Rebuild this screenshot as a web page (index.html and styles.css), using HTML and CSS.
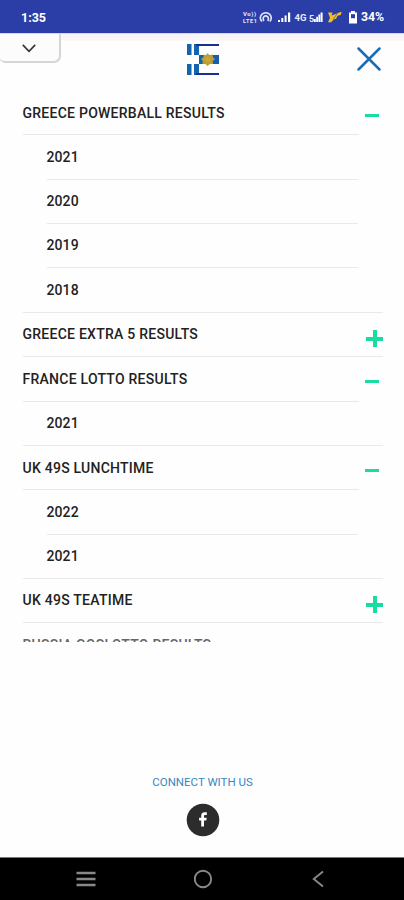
FILE: index.html
```html
<!DOCTYPE html>
<html lang="en">
<head>
  <meta charset="UTF-8">
  <meta name="viewport" content="width=device-width, initial-scale=1.0">
  <title>Lottery Results</title>
  <link rel="stylesheet" href="styles.css">
</head>
<body>
  <div class="status-bar">
    <span class="time">1:35</span>
    <div class="status-right">
      <svg class="status-icons" width="117" height="16" viewBox="0 0 117 16">
        <g class="status-text">
          <text x="1" y="7.2" font-size="6" textLength="13">Vo))</text>
          <text x="1" y="13.5" font-size="5.5" textLength="14">LTE1</text>
          <text x="52.5" y="12" font-size="9.5" textLength="12">4G</text>
          <text x="67" y="13" font-size="9">5</text>
        </g>
        <!-- hotspot -->
        <path d="M20 12.5 Q17.5 10 18.7 7 Q20.3 3.8 23.8 3.8 Q27.3 3.8 28.9 7 Q30 10 27.8 12.5 M21.8 12 Q20.4 9.5 22 7.6 Q23.8 6.2 25.6 7.6 Q27.2 9.5 25.8 12" fill="none" stroke="#dfe2fa" stroke-width="1.6"/>
        <!-- signal bars -->
        <path d="M36 11h2v2h-2z M39.3 9h2v4h-2z M42.6 6.5h2v6.5h-2z M46 3.5h2.2V13H46z" fill="#fff"/>
        <path d="M72 10h1.8v3H72z M74.2 7.8h1.8V13h-1.8z M76.4 5.5h1.8V13h-1.8z M78.6 3.5h2V13h-2z" fill="#fff"/>
        <!-- stripes -->
        <path d="M86 3.5h4.5l-.8 3L98.5 3h1.2l-1 3-3.2.8-1.4 3-2.6.6-2.2 2.8H86l2-4.5z" fill="#f2bd26"/>
        <path d="M91.5 10l4-6" stroke="#2b3ea8" stroke-width=".6"/>
        <!-- battery -->
        <path d="M109 2h4v1.4h2V14.6h-8V3.4h2z" fill="#fff"/>
        <path d="M109 5.2h4v4h-4z" fill="#2b3ea8"/>
      </svg>
      <span class="battery-level">34%</span>
    </div>
  </div>

  <div class="page">
    <header class="header">
      <div class="pull-tab">
        <svg width="14" height="9" viewBox="0 0 14 9"><path d="M.8 .9 L7 7.4 L13.2 .9" fill="none" stroke="#333" stroke-width="1.6"/></svg>
      </div>
      <svg class="logo" width="32" height="31" viewBox="0 0 32 31">
        <path d="M0 0h4.5v11H0z M0 20h4.5v11H0z M7 0h5v11H7z M7 20h5v11H7z M12 11h4v9h-4z" fill="#1565ae"/>
        <path d="M12 11h20v9H12z" fill="#175fa9"/>
        <path d="M9 0h23v2H9z M9 29h23v2H9z" fill="#1a2f94"/>
        <path d="M20.5 9l2 2.2 3-.6.5 2.6 2 2.1-2.2 1.6.2 3-3 .1-2.5 2-2.2-2-3-.3.5-2.8-1.8-2 2.4-1.6.3-2.6 2.4.3z" fill="#b99f3c"/>
        <circle cx="20.7" cy="15.4" r="2.4" fill="#d3a62b"/>
      </svg>
      <svg class="close" width="24" height="24" viewBox="0 0 24 24"><path d="M1.5 1.5l21 21M22.5 1.5l-21 21" stroke="#1a6db5" stroke-width="2.5" stroke-linecap="round"/></svg>
    </header>

    <nav class="menu">
      <div class="menu-item open"><span>GREECE POWERBALL RESULTS</span><i class="minus"></i></div>
      <div class="sub-menu">
        <div class="sub-item">2021</div>
        <div class="sub-item">2020</div>
        <div class="sub-item">2019</div>
        <div class="sub-item">2018</div>
      </div>
      <div class="menu-item"><span>GREECE EXTRA 5 RESULTS</span><i class="plus"></i></div>
      <div class="menu-item open"><span>FRANCE LOTTO RESULTS</span><i class="minus"></i></div>
      <div class="sub-menu">
        <div class="sub-item">2021</div>
      </div>
      <div class="menu-item open"><span>UK 49S LUNCHTIME</span><i class="minus"></i></div>
      <div class="sub-menu">
        <div class="sub-item">2022</div>
        <div class="sub-item">2021</div>
      </div>
      <div class="menu-item"><span>UK 49S TEATIME</span><i class="plus"></i></div>
      <div class="menu-item last"><span>RUSSIA GOSLOTTO RESULTS</span></div>
    </nav>

    <footer class="connect">
      <div class="connect-title">CONNECT WITH US</div>
      <svg width="34" height="34" viewBox="0 0 34 34">
        <circle cx="17" cy="17" r="16.3" fill="#2c2c2c"/>
        <path d="M15.2 23.5v-6h-2.1v-2.7h2.1v-2c0-2.4 1.3-3.5 3.4-3.5h2.2V12h-1.4c-1.1 0-1.4.5-1.4 1.3v1.5h2.7l-.4 2.7H18v6z" fill="#fff"/>
      </svg>
    </footer>
  </div>

  <div class="nav-bar">
    <svg width="20" height="16" viewBox="0 0 20 16"><path d="M.5 2h19M.5 8h19M.5 14h19" stroke="#888" stroke-width="2.4"/></svg>
    <svg width="20" height="20" viewBox="0 0 20 20"><circle cx="10" cy="10" r="8.2" fill="none" stroke="#888" stroke-width="1.9"/></svg>
    <svg width="12" height="18" viewBox="0 0 12 18"><path d="M11 1.5L1.8 9l9.2 7.5" fill="none" stroke="#888" stroke-width="1.9"/></svg>
  </div>
</body>
</html>
```
FILE: styles.css
```css
* {
  box-sizing: border-box;
}
body {
  margin: 0;
  height: 900px;
  display: flex;
  flex-direction: column;
  overflow: hidden;
  font-family: Roboto, "Liberation Sans", sans-serif;
  background: #fefefe;
  color: #222;
}
.status-bar {
  height: 33px;
  flex: none;
  display: flex;
  align-items: center;
  justify-content: space-between;
  padding: 1px 19px 0 21px;
  background: #2b3ea8;
  color: #fff;
}
.time {
  font-size: 12.5px;
  font-weight: 700;
}
.status-right {
  display: flex;
  align-items: center;
  gap: 2px;
}
.status-text {
  fill: #e8eaff;
  font-weight: 700;
}
.battery-level {
  width: 24px;
  font-size: 12.3px;
  font-weight: 700;
}
.page {
  flex: 1;
  min-height: 0;
  display: flex;
  flex-direction: column;
  border-top: 1px solid #d5d7ec;
}
.header {
  height: 57px;
  flex: none;
  display: grid;
  grid-template-columns: 1fr 32px 1fr;
  align-items: start;
  background: linear-gradient(#f8f4f7 6px, #fefefe 7px);
}
.pull-tab {
  width: 61px;
  height: 29px;
  padding: 10px 0 0 22px;
  line-height: 0;
  background: #fcfcfc;
  border: solid #d5d5d5;
  border-width: 0 2px 2px 0;
  border-radius: 0 0 7px 5px;
}
.logo {
  margin: 10px 0 0 1px;
}
.close {
  margin-top: 13px;
  margin-right: 23px;
  justify-self: end;
}
.menu {
  height: 550.5px;
  flex: none;
  overflow: hidden;
  padding: 0 21px 0 22.5px;
}
.menu-item,
.sub-item {
  height: 44.37px;
  display: flex;
  align-items: center;
  justify-content: space-between;
  padding-bottom: 0.8px;
  font-size: 14px;
  font-weight: 500;
  letter-spacing: 0.25px;
  border-bottom: 1px solid #e9e9e9;
}
.menu-item.open {
  border-bottom: none;
  background: linear-gradient(#e9e9e9, #e9e9e9) left bottom / 336px 1px no-repeat;
}
.sub-menu {
  padding: 0 25px 0 24px;
}
.sub-item {
  letter-spacing: 0.1px;
}
/* the last year closes the group, its line runs the full width */
.sub-item:last-child {
  margin: 0 -25px 0 -24px;
  padding-left: 24px;
}
.minus,
.plus {
  flex: none;
}
.minus {
  width: 14px;
  height: 3px;
  margin: 6px 4px 0 0;
  background: #18dca0;
}
.plus {
  width: 17px;
  height: 17px;
  margin: 8px 0 0;
  background: linear-gradient(#18dca0, #18dca0) 0 7px / 17px 4px no-repeat,
              linear-gradient(#18dca0, #18dca0) 7px 0 / 4px 17px no-repeat;
}
.last {
  color: #666;
}
.connect {
  margin-top: 132px;
  display: flex;
  flex-direction: column;
  align-items: center;
  gap: 13px;
  padding-left: 1px;
}
.connect-title {
  font-size: 11.5px;
  line-height: 16px;
  color: #3a86bd;
}
.nav-bar {
  height: 43.5px;
  flex: none;
  display: flex;
  align-items: center;
  justify-content: space-between;
  padding: 0 80px 0 76px;
  background: #000;
  border-top: 1px solid #777;
}
.nav-bar circle {
  transform: translateX(-1px);
}
```
